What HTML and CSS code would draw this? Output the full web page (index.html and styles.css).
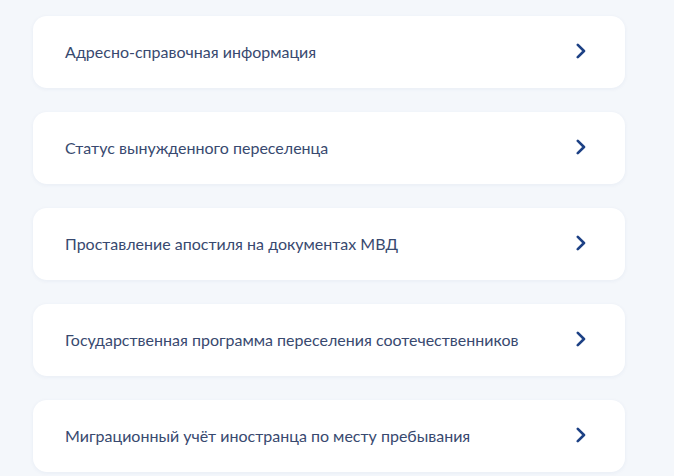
FILE: index.html
```html
<!DOCTYPE html>
<html lang="ru">
<head>
<meta charset="utf-8">
<link rel="stylesheet" href="styles.css">
</head>
<body>
<div class="list">
  <a class="card" href="#"><span class="label">Адресно-справочная информация</span><svg class="chev" viewBox="0 0 10 16"><path d="M1.8 1.8 L8 8 L1.8 14.2"/></svg></a>
  <a class="card" href="#"><span class="label">Статус вынужденного переселенца</span><svg class="chev" viewBox="0 0 10 16"><path d="M1.8 1.8 L8 8 L1.8 14.2"/></svg></a>
  <a class="card" href="#"><span class="label">Проставление апостиля на документах МВД</span><svg class="chev" viewBox="0 0 10 16"><path d="M1.8 1.8 L8 8 L1.8 14.2"/></svg></a>
  <a class="card" href="#"><span class="label">Государственная программа переселения соотечественников</span><svg class="chev" viewBox="0 0 10 16"><path d="M1.8 1.8 L8 8 L1.8 14.2"/></svg></a>
  <a class="card" href="#"><span class="label">Миграционный учёт иностранца по месту пребывания</span><svg class="chev" viewBox="0 0 10 16"><path d="M1.8 1.8 L8 8 L1.8 14.2"/></svg></a>
</div>
</body>
</html>
```
FILE: styles.css
```css
html, body {
  margin: 0;
  padding: 0;
  background: #f4f7fb;
  height: 100%;
  overflow: hidden;
}
body {
  font-family: Lato, "Noto Sans", sans-serif;
}
.list {
  display: flex;
  flex-direction: column;
  gap: 24px;
  padding: 16px 49px 0 33px;
}
.card {
  display: flex;
  align-items: center;
  justify-content: space-between;
  height: 72px;
  box-sizing: border-box;
  padding: 0 39px 2px 32px;
  background: #ffffff;
  border-radius: 14px;
  box-shadow: 0 1px 4px rgba(40, 70, 130, 0.06);
  text-decoration: none;
}
.label {
  font-size: 16px;
  color: #38496f;
  letter-spacing: 0;
}
.chev {
  width: 10px;
  height: 16px;
  fill: none;
  stroke: #1d4185;
  stroke-width: 2.6;
  stroke-linecap: round;
  stroke-linejoin: round;
}
```
